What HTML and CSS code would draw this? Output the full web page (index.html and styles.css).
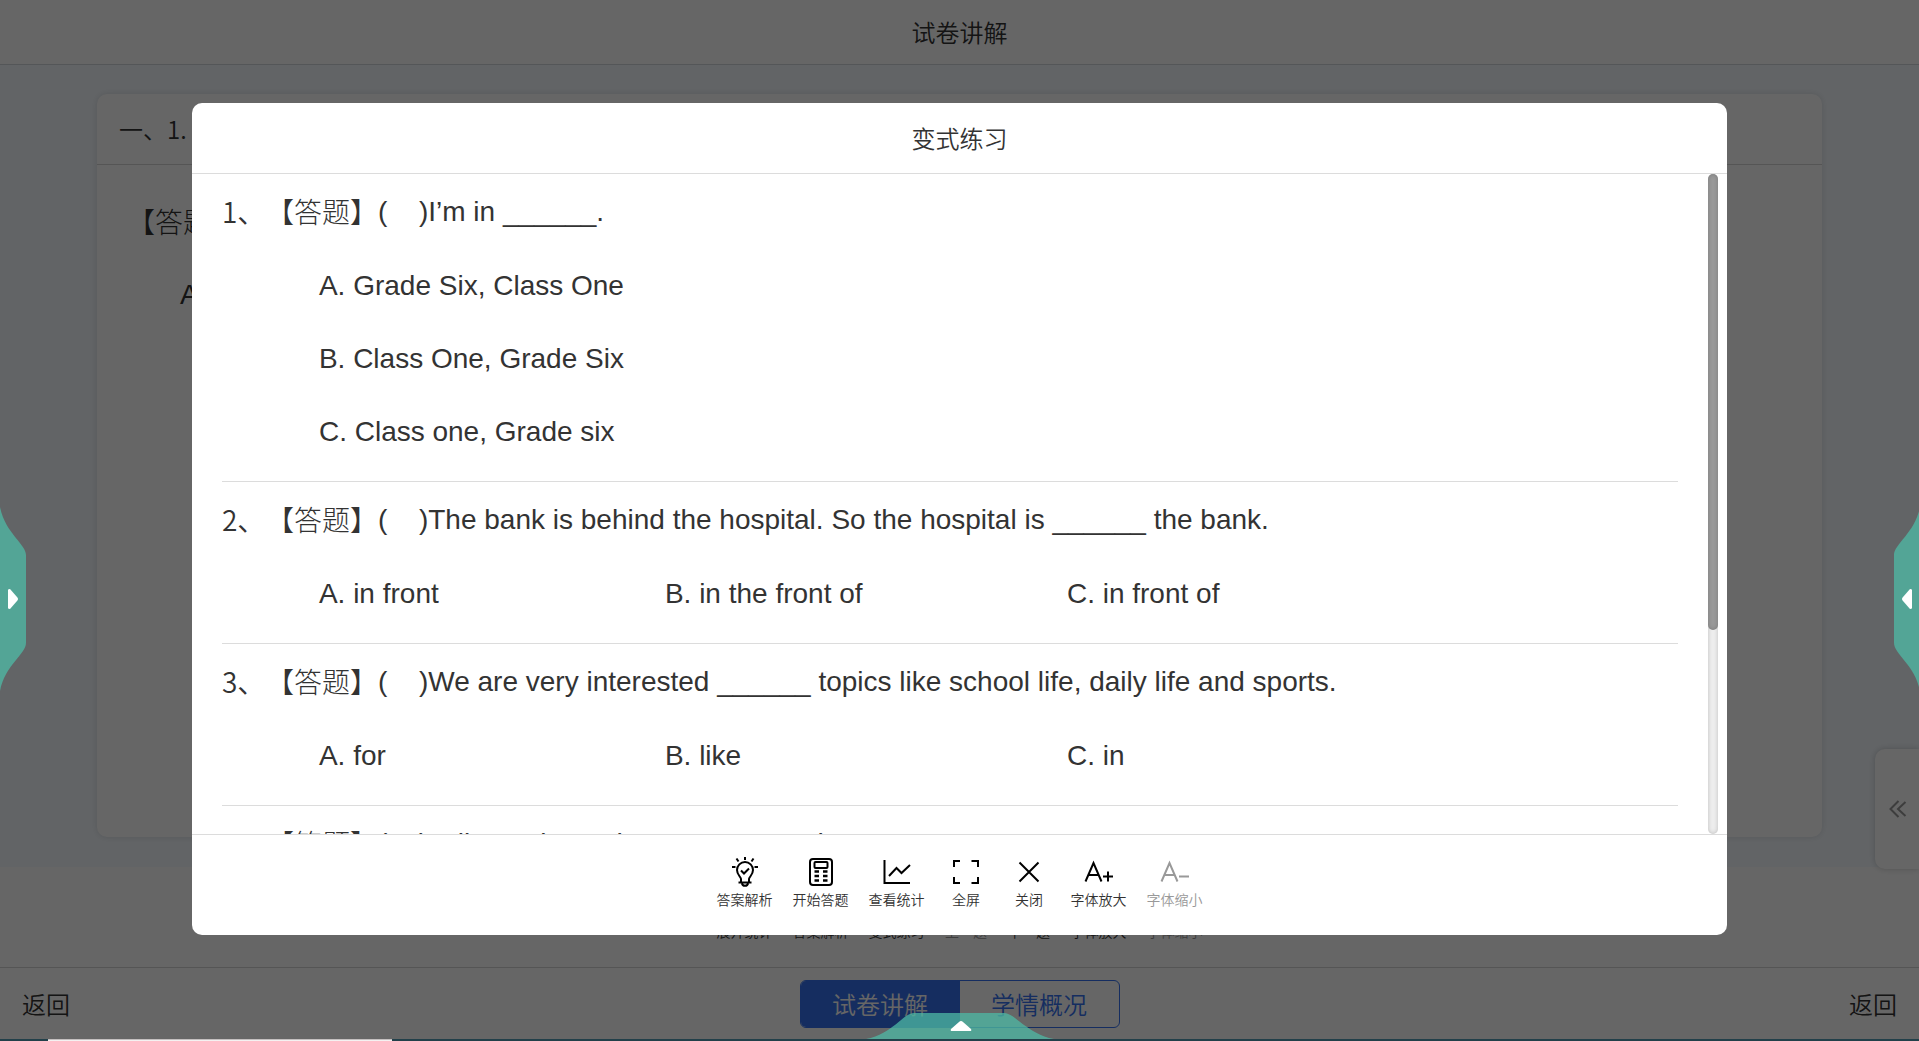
FILE: index.html
```html
<!DOCTYPE html>
<html lang="zh-CN">
<head>
<meta charset="utf-8">
<title>试卷讲解</title>
<link rel="stylesheet" href="styles.css">
</head>
<body>
<div class="app">
  <header class="app-header"><h1 class="title">试卷讲解</h1></header>
  <main class="app-main">
    <section class="card">
      <h2 class="card-title">一、1.</h2>
      <div class="card-body">
        <p class="stem"><span class="tag">【答题】</span></p>
        <p class="card-option">A.</p>
      </div>
    </section>
  </main>
  <nav class="toolbar">
    <button class="tool">展开统计</button>
    <button class="tool">答案解析</button>
    <button class="tool">变式练习</button>
    <button class="tool is-off">上一题</button>
    <button class="tool">下一题</button>
    <button class="tool">字体放大</button>
    <button class="tool is-off">字体缩小</button>
  </nav>
  <footer class="app-footer">
    <button class="back">返回</button>
    <div class="switch">
      <button class="switch-item is-active">试卷讲解</button>
      <button class="switch-item">学情概况</button>
    </div>
    <button class="back">返回</button>
  </footer>
  <button class="drawer" aria-label="展开侧栏">
    <svg width="20" height="20" viewBox="0 0 20 20" fill="none" stroke="#999" stroke-width="2"><path d="M11.500 2 3.500 10l8 8M18.500 3l-7.500 7 7.500 7"/></svg>
  </button>
</div>
<div class="strip"><span class="strip-tab"></span></div>

<div class="overlay">
  <div class="modal" role="dialog" aria-label="变式练习">
    <header class="modal-header"><h2 class="title">变式练习</h2></header>
    <div class="modal-body">
      <div class="questions">
        <article class="question">
          <span class="number">1、</span>
          <div class="content">
            <p class="stem"><span class="tag">【答题】</span><span class="blank">(</span>)I’m in ______.</p>
            <ul class="options">
              <li>A. Grade Six, Class One</li>
              <li>B. Class One, Grade Six</li>
              <li>C. Class one, Grade six</li>
            </ul>
          </div>
        </article>
        <article class="question">
          <span class="number">2、</span>
          <div class="content">
            <p class="stem"><span class="tag">【答题】</span><span class="blank">(</span>)The bank is behind the hospital. So the hospital is ______ the bank.</p>
            <ul class="options inline">
              <li>A. in front</li>
              <li>B. in the front of</li>
              <li>C. in front of</li>
            </ul>
          </div>
        </article>
        <article class="question">
          <span class="number">3、</span>
          <div class="content">
            <p class="stem"><span class="tag">【答题】</span><span class="blank">(</span>)We are very interested ______ topics like school life, daily life and sports.</p>
            <ul class="options inline">
              <li>A. for</li>
              <li>B. like</li>
              <li>C. in</li>
            </ul>
          </div>
        </article>
        <article class="question">
          <span class="number">4、</span>
          <div class="content">
            <p class="stem"><span class="tag">【答题】</span><span class="blank">(</span>)Tell me about she ______ use the</p>
          </div>
        </article>
      </div>
      <div class="scrollbar"><div class="thumb"></div></div>
    </div>
    <footer class="modal-footer">
      <button class="tool">
        <svg class="icon" viewBox="0 0 32 32"><path d="M12 26v-3c0-2-4-4-4-9a8 8 0 0 1 16 0c0 5-4 7-4 9v3M9.500 26.500h13M13 27.500c.5 3 5.500 3 6 0M12 14.500l3 3 5-5M16 1v3M7.500 2.500l2 3M24.500 2.500l-2 3M3 11h3.500M25.500 11H29"/></svg>
        答案解析</button>
      <button class="tool">
        <svg class="icon" viewBox="0 0 32 32"><rect x="5" y="3" width="22" height="26" rx="3"/><rect x="9.500" y="6" width="13" height="6" rx="1"/><path d="M9.500 15.500H14M9.500 20H14M9.500 24.500H14M18 15.500h4.500M18 20h4.500M18 24.500h4.500" stroke-width="2.500"/></svg>
        开始答题</button>
      <button class="tool">
        <svg class="icon" viewBox="0 0 32 32"><path d="M3.500 4v23H29M8 20l7.500-8 5 5L29 9"/></svg>
        查看统计</button>
      <button class="tool">
        <svg class="icon" viewBox="0 0 32 32"><path d="M4 11V5h6M21.500 5H28v6M28 21v6h-6.500M10 27H4v-6"/></svg>
        全屏</button>
      <button class="tool">
        <svg class="icon" viewBox="0 0 32 32"><path d="M6.500 6.500l19 19M25.500 6.500l-19 19"/></svg>
        关闭</button>
      <button class="tool">
        <svg class="icon" viewBox="0 0 32 32"><path d="M2.500 25.500 10.500 7l8 18.500M5.500 19h10M20 20.500h10M25 15.500v10"/></svg>
        字体放大</button>
      <button class="tool is-off" disabled>
        <svg class="icon" viewBox="0 0 32 32"><path d="M2.500 25.500 10.500 7l8 18.500M5.500 19h10M20 20.500h10"/></svg>
        字体缩小</button>
    </footer>
  </div>
</div>

<button class="edge edge-left" aria-label="左侧工具">
  <svg width="26" height="184" viewBox="0 0 26 184"><path class="edge-shape" d="M0 0C5 26 26 37 26 48V136C26 147 5 158 0 184Z"/><path class="edge-arrow" d="M8 83q0-1 2-1l7 8q2 2 0 4l-7 8q-2 0-2-1z"/></svg>
</button>
<button class="edge edge-right" aria-label="右侧工具">
  <svg width="26" height="184" viewBox="0 0 26 184"><path class="edge-shape" d="M26 0C21 26 0 37 0 48V136C0 147 21 158 26 184Z"/><path class="edge-arrow" d="M18 83q0-1-2-1l-7 8q-2 2 0 4l7 8q2 0 2-1z"/></svg>
</button>
<button class="edge edge-bottom" aria-label="底部工具">
  <svg width="188" height="26" viewBox="0 0 188 26"><path class="edge-shape" d="M0 26C27 21 37 0 48 0H138C149 0 161 21 188 26Z"/><path class="edge-arrow" d="M86 18q-2 0-1-2l8-7q2-2 4 0l8 7q1 2-1 2z"/></svg>
</button>
</body>
</html>
```
FILE: styles.css
```css
* {
  box-sizing: border-box;
}

body {
  margin: 0;
  height: 100vh;
  overflow: hidden;
  display: flex;
  flex-direction: column;
  color: #333;
  font-family: "Noto Sans CJK SC", sans-serif;
  font-weight: 350;
}

h1, h2, p, ul {
  margin: 0;
  padding: 0;
  font-weight: inherit;
}

ul {
  list-style: none;
}

button {
  margin: 0;
  padding: 0;
  border: 0;
  background: none;
  color: inherit;
  font: inherit;
  cursor: pointer;
}

/* page behind the dialog */
.app {
  position: relative;
  flex: 1;
  min-height: 0;
  display: flex;
  flex-direction: column;
  background: #fff;
}

.app-header {
  height: 65px;
  display: flex;
  align-items: center;
  justify-content: center;
  border-bottom: 1px solid #d3d6db;
}

.title {
  font-size: 24px;
  line-height: 36px;
}

.app-main {
  flex: 1;
  min-height: 0;
  display: flex;
  padding: 29px 97px 30px;
  background: #f5faff;
}

.card {
  flex: 1;
  background: #fff;
  border-radius: 10px;
  box-shadow: 0 0 6px rgba(0, 0, 0, .12);
}

.card-title {
  height: 71px;
  padding-left: 22px;
  border-bottom: 1px solid #d5d5d5;
  font-size: 24px;
  line-height: 70px;
}

.card-body {
  padding: 20px 30px;
}

.card-option {
  padding-left: 53px;
  font: 28px/73px "Liberation Sans", Arial, sans-serif;
}

.toolbar,
.modal-footer {
  display: flex;
  justify-content: center;
  align-items: center;
  height: 100px;
}

.toolbar {
  align-items: flex-end;
  padding-bottom: 25px;
}

.tool {
  display: flex;
  flex-direction: column;
  align-items: center;
  min-width: 43px;
  margin: 0 10px;
  font-size: 14px;
  line-height: 22px;
}

.is-off {
  color: #999;
}

.icon {
  width: 32px;
  height: 32px;
  fill: none;
  stroke: #000;
  stroke-width: 2;
}

.is-off .icon {
  stroke: #999;
}

.app-footer {
  display: flex;
  align-items: center;
  justify-content: space-between;
  height: 72px;
  padding: 0 22px;
  border-top: 1px solid #d5d5d5;
}

.back {
  font-size: 24px;
  line-height: 36px;
}

.switch {
  display: flex;
  width: 320px;
  height: 48px;
  border: 1px solid #3572f0;
  border-radius: 6px;
  overflow: hidden;
}

.switch-item {
  flex: 1;
  color: #3572f0;
  font-size: 24px;
}

.switch-item.is-active {
  background: #3572f0;
  color: #fff;
}

.drawer {
  position: absolute;
  right: 0;
  top: 749px;
  width: 44px;
  height: 120px;
  display: flex;
  align-items: center;
  justify-content: center;
  background: #fff;
  border-radius: 10px 0 0 10px;
  box-shadow: 0 0 6px rgba(0, 0, 0, .2);
}

.strip {
  height: 2px;
  padding-left: 48px;
  background: #22404a;
}

.strip-tab {
  display: block;
  width: 344px;
  height: 2px;
  background: #f4f1f1;
  border-top: 1px solid #c4c0c0;
}

/* dialog */
.overlay {
  position: fixed;
  inset: 0 0 2px;
  display: flex;
  align-items: center;
  justify-content: center;
  padding-bottom: 1px;
  background: rgba(0, 0, 0, .6);
}

.modal {
  display: flex;
  flex-direction: column;
  width: 80%;
  height: 80vh;
  background: #fff;
  border-radius: 10px;
}

.modal-header {
  height: 71px;
  display: flex;
  align-items: center;
  justify-content: center;
  border-bottom: 1px solid #dcdcdc;
}

.modal-body {
  flex: 1;
  min-height: 0;
  display: flex;
  padding: 0 9px 0 30px;
}

.questions {
  flex: 1;
  overflow: hidden;
  margin-right: 30px;
}

.question {
  display: flex;
  padding: 1px 0 13px;
  border-bottom: 1px solid #dcdcdc;
}

.number {
  width: 44px;
  font-size: 28px;
  line-height: 73px;
}

.stem,
.options {
  font: 28px/73px "Liberation Sans", Arial, sans-serif;
}

.stem {
  display: flex;
}

.tag {
  font-family: "Noto Sans CJK SC", sans-serif;
  font-weight: 300;
}

.blank {
  width: 41px;
}

.options {
  margin-top: 1px;
  padding-left: 53px;
}

.options.inline {
  display: grid;
  grid-template-columns: 346px 402px auto;
}

.scrollbar {
  width: 10px;
  border-radius: 5px;
  background: #ededed;
  box-shadow: inset 0 0 4px rgba(0, 0, 0, .2);
}

.thumb {
  height: 69%;
  border-radius: 5px;
  background: #999;
  box-shadow: inset 0 0 4px rgba(0, 0, 0, .2);
}

.modal-footer {
  height: 101px;
  padding-bottom: 4px;
  border-top: 1px solid #dcdcdc;
}

/* pull-out handles on the window edges */
.edge {
  position: fixed;
  line-height: 0;
}

.edge-left {
  left: 0;
  top: 507px;
}

.edge-right {
  right: -1px;
  top: 507px;
}

.edge-bottom {
  left: 50%;
  bottom: 2px;
  margin-left: -94px;
}

.edge-shape {
  fill: rgba(78, 186, 165, .75);
}

.edge-arrow {
  fill: #fff;
}
```
